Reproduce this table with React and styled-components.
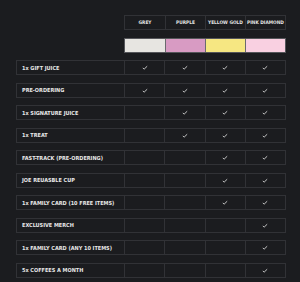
import React from "react";
import styled, { createGlobalStyle } from "styled-components";

const GlobalStyle = createGlobalStyle`
  html, body {
    margin: 0;
    padding: 0;
    background: #1b1c1f;
  }
  body {
    font-family: "Liberation Sans Narrow", "DejaVu Sans Condensed", "Roboto Condensed", "Liberation Sans", sans-serif;
    font-stretch: condensed;
  }
`;

const tiers = [
  { name: "GREY", color: "#e7e5e1" },
  { name: "PURPLE", color: "#d89bc3" },
  { name: "YELLOW GOLD", color: "#f6e782" },
  { name: "PINK DIAMOND", color: "#f9d0e1" },
];

const perks = [
  { label: "1x GIFT JUICE", has: [1, 1, 1, 1] },
  { label: "PRE-ORDERING", has: [1, 1, 1, 1] },
  { label: "1x SIGNATURE JUICE", has: [0, 1, 1, 1] },
  { label: "1x  TREAT", has: [0, 1, 1, 1] },
  { label: "FAST-TRACK (PRE-ORDERING)", has: [0, 0, 1, 1] },
  { label: "JOE REUASBLE CUP", has: [0, 0, 1, 1] },
  { label: "1x FAMILY CARD (10 FREE ITEMS)", has: [0, 0, 1, 1] },
  { label: "EXCLUSIVE MERCH", has: [0, 0, 0, 1] },
  { label: "1x FAMILY CARD (ANY 10  ITEMS)", has: [0, 0, 0, 1] },
  { label: "5x COFFEES A MONTH", has: [0, 0, 0, 1] },
];

const Check = () => (
  <svg width="6" height="5" viewBox="0 0 6 5">
    <path d="M0.8 3 L2.2 4.1 L5.2 1.2" fill="none" stroke="#c4c4c4" strokeWidth="1" />
  </svg>
);

const App = () => (
  <>
    <GlobalStyle />
    <Page>
      <Table>
        <Line>
          <Spacer />
          <Group>
            {tiers.map(t => (
              <HeadCell key={t.name}>{t.name}</HeadCell>
            ))}
          </Group>
        </Line>
        <Line>
          <Spacer />
          <Group $swatch>
            {tiers.map(t => (
              <Swatch key={t.name} $color={t.color} />
            ))}
          </Group>
        </Line>
        {perks.map(p => (
          <Row key={p.label}>
            <Label>{p.label}</Label>
            {p.has.map((h, i) => (
              <Cell key={i}>{h ? <Check /> : null}</Cell>
            ))}
          </Row>
        ))}
      </Table>
    </Page>
  </>
);

const Page = styled.div`
  width: 300px;
  height: 282px;
  padding: 15px 0 0 16px;
  box-sizing: border-box;
  overflow: hidden;
`;

const Table = styled.div`
  display: flex;
  flex-direction: column;
  gap: 7.5px;
  width: 270px;
`;

const Line = styled.div`
  display: flex;
  height: 15px;
`;

const Spacer = styled.div`
  width: 108px;
  flex: none;
`;

const Group = styled.div`
  flex: 1;
  display: grid;
  grid-template-columns: repeat(4, 1fr);
  border: 1px solid ${p => (p.$swatch ? "#55565a" : "#313236")};
  box-sizing: border-box;
`;

const HeadCell = styled.div`
  display: flex;
  align-items: center;
  justify-content: center;
  color: #e4e4e4;
  font-size: 4.8px;
  font-weight: 700;
  white-space: nowrap;
  overflow: hidden;
  & + & {
    border-left: 1px solid #313236;
  }
`;

const Swatch = styled.div`
  background: ${p => p.$color};
  & + & {
    border-left: 1px solid #6a6a6e;
  }
`;

const Row = styled.div`
  display: grid;
  grid-template-columns: 107px repeat(4, 1fr);
  height: 15px;
  border: 1px solid #313236;
  box-sizing: border-box;
`;

const Label = styled.div`
  display: flex;
  align-items: center;
  padding-left: 5px;
  color: #e8e8e8;
  font-size: 5.5px;
  font-weight: 700;
  white-space: nowrap;
`;

const Cell = styled.div`
  display: flex;
  align-items: center;
  justify-content: center;
  border-left: 1px solid #313236;
`;

export default App;
